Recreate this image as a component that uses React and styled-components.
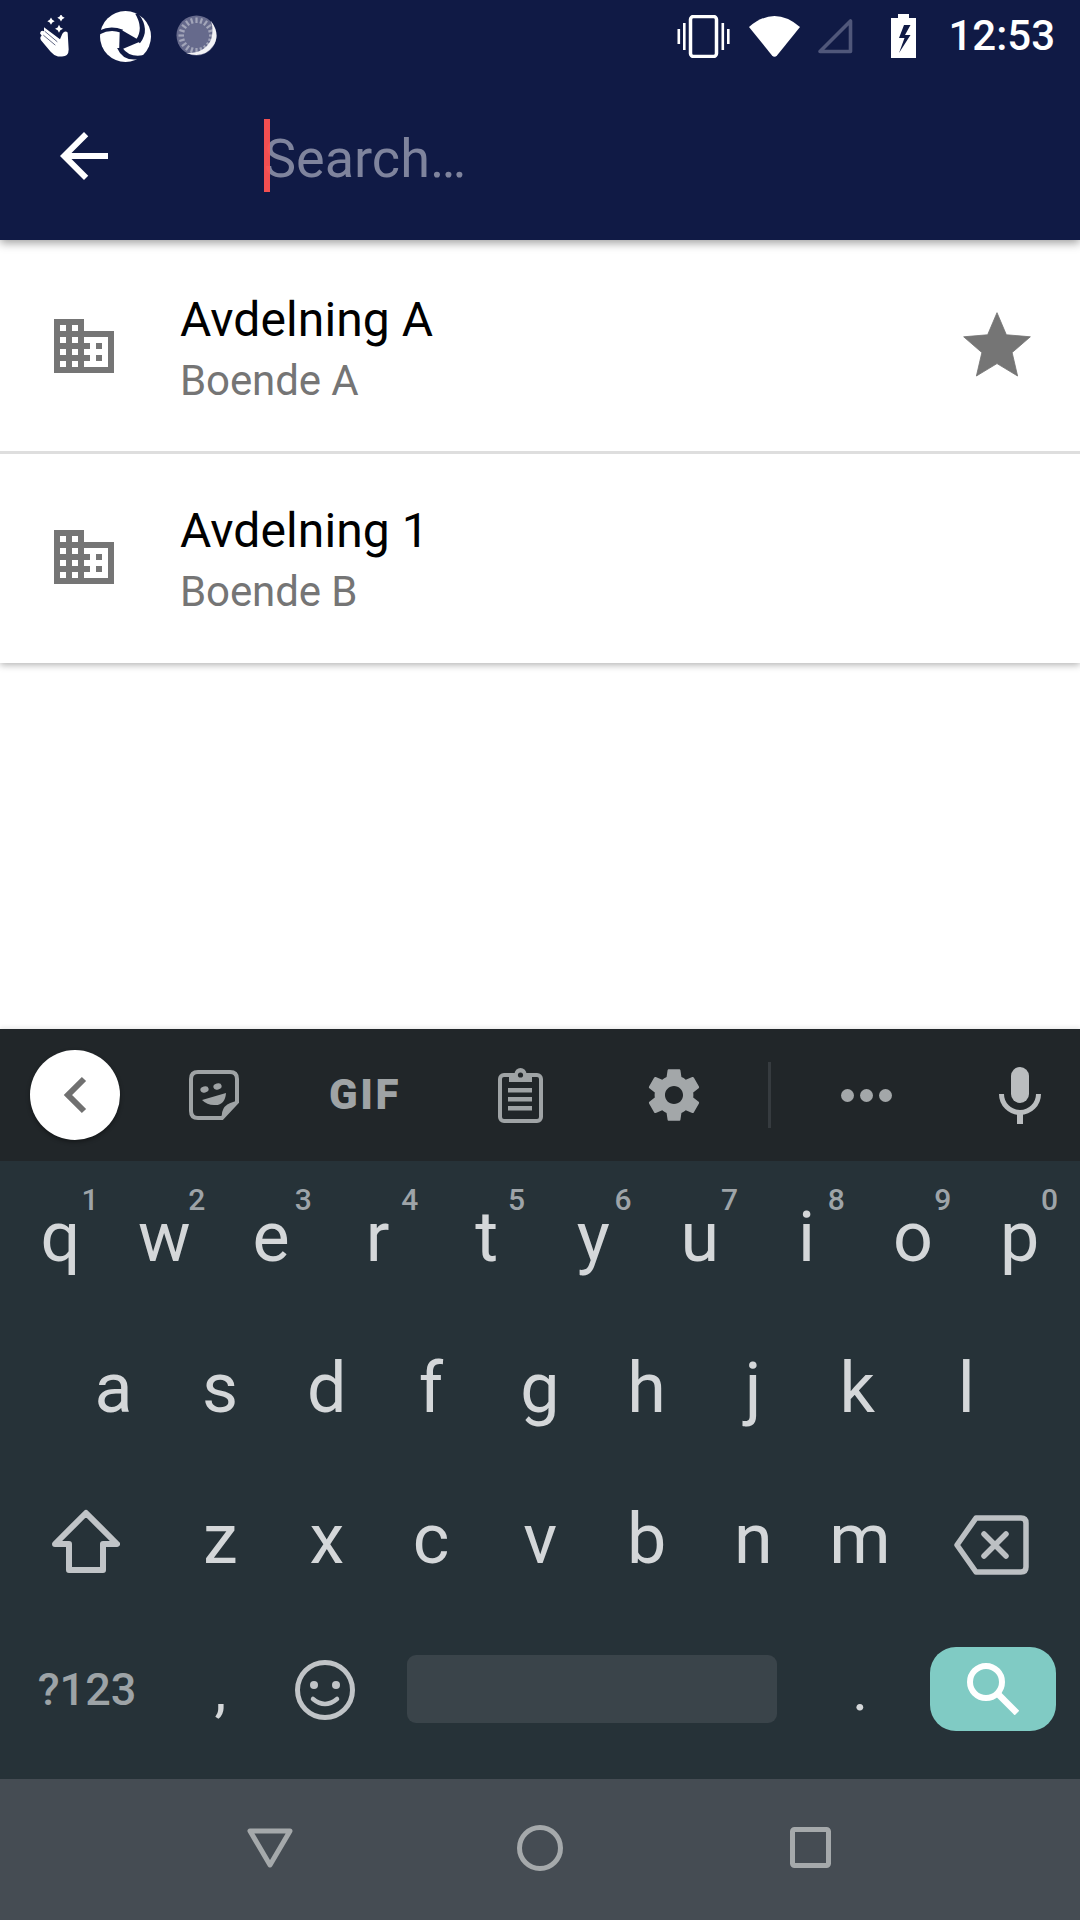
import React from "react";
import styled, { createGlobalStyle } from "styled-components";

const GlobalStyle = createGlobalStyle`
  html, body {
    margin: 0;
    padding: 0;
    background: #fff;
    font-family: Roboto, "Liberation Sans", sans-serif;
  }
`;

const Screen = styled.div`
  width: 1080px;
  height: 1920px;
  display: flex;
  flex-direction: column;
  overflow: hidden;
  background: #fff;
`;

const Header = styled.header`
  position: relative;
  z-index: 2;
  height: 240px;
  flex: none;
  background: #101a45;
  box-shadow: 0 3px 9px rgba(0, 0, 0, 0.38);
`;

const StatusBar = styled.div`
  height: 72px;
  display: flex;
  align-items: center;
  justify-content: space-between;
  padding: 0 25px 0 40px;
`;

const StatusGroup = styled.div`
  display: flex;
  align-items: center;
`;

const StatusIcon = styled.svg`
  display: block;
  flex: none;
  margin-left: ${(p) => p.$gap || 0}px;
`;

const Clock = styled.span`
  margin-left: 32px;
  font-size: 42px;
  font-weight: 500;
  line-height: 72px;
  color: #fff;
`;

const SearchBar = styled.div`
  height: 168px;
  display: flex;
  align-items: center;
  padding-left: 48px;
`;

const SearchField = styled.div`
  position: relative;
  margin-left: 144px;
  font-size: 54px;
  line-height: 72px;
  color: #7f849d;
`;

const SearchHint = styled.span`
  display: block;
  padding-top: 3px;
  height: 69px;
`;

const Caret = styled.i`
  position: absolute;
  left: 0;
  top: -1px;
  width: 6px;
  height: 73px;
  background: #ff5252;
  opacity: 0.95;
`;

const List = styled.div`
  position: relative;
  z-index: 1;
  flex: none;
  box-shadow: 0 2px 7px rgba(0, 0, 0, 0.3);
`;

const Row = styled.div`
  position: relative;
  height: ${(p) => (p.$divided ? 212 : 211)}px;
  display: flex;
  align-items: center;
  padding: 0 43px 0 48px;
  background: #fff;
  &::before {
    content: "";
    display: ${(p) => (p.$divided ? "block" : "none")};
    position: absolute;
    left: 0;
    right: 0;
    top: 0;
    height: 3px;
    background: #dedede;
  }
`;

const RowText = styled.div`
  flex: 1;
  margin: 4px 0 0 60px;
  display: flex;
  flex-direction: column;
  gap: 6px;
`;

const Title = styled.div`
  font-size: 48px;
  line-height: 60px;
  letter-spacing: 0.1px;
  color: #000;
`;

const Subtitle = styled.div`
  font-size: 42px;
  line-height: 50px;
  letter-spacing: -0.1px;
  color: #757575;
`;

const Blank = styled.div`
  flex: 1;
`;

const Keyboard = styled.div`
  flex: none;
  height: 750px;
  background: #263238;
  box-shadow: 0 -2px 4px rgba(0, 0, 0, 0.08);
`;

const Toolbar = styled.div`
  height: 132px;
  display: grid;
  grid-template-columns: 150px 128px 174px 136px 172px 8px 3px 190px 118px;
  align-items: center;
  justify-items: center;
  background: #212629;
`;

const Slot = styled.div`
  display: flex;
  align-items: center;
  justify-content: center;
`;

const BackCircle = styled.div`
  width: 90px;
  height: 90px;
  border-radius: 50%;
  display: flex;
  align-items: center;
  justify-content: center;
  background: #fff;
  box-shadow: 0 2px 4px rgba(0, 0, 0, 0.4);
`;

const GifLabel = styled.span`
  font-size: 42px;
  font-weight: 900;
  line-height: 40px;
  letter-spacing: 2.5px;
  color: #9fa3a5;
`;

const Separator = styled.div`
  width: 3px;
  height: 66px;
  background: #363b3f;
`;

const Dot = styled.i`
  width: 13px;
  height: 13px;
  border-radius: 50%;
  background: #a3a7a9;
`;

const Dots = styled.div`
  display: flex;
  gap: 6px;
`;

const Keys = styled.div`
  padding: 0 7px 14px;
`;

const KeyRow = styled.div`
  height: 151px;
  display: flex;
  padding: 0 ${(p) => p.$inset || 0}px;
`;

const Key = styled.div`
  position: relative;
  box-sizing: border-box;
  width: ${(p) => p.$w || 106.6}px;
  flex: none;
  display: flex;
  align-items: center;
  justify-content: center;
  padding: ${(p) => p.$pad || 0};
  font-size: ${(p) => p.$size || 70}px;
  line-height: 1;
  color: ${(p) => p.$color || "#d4d7d9"};
  font-weight: ${(p) => p.$weight || 400};
`;

const Hint = styled.span`
  position: absolute;
  top: 24px;
  right: 15px;
  font-size: 30px;
  font-weight: 500;
  line-height: 30px;
  color: #9ea4a8;
`;

const SpaceBar = styled.div`
  width: 370px;
  height: 68px;
  flex: none;
  margin: 41px 0 0 27px;
  border-radius: 9px;
  background: #3a444a;
`;

const SearchKey = styled.div`
  width: 126px;
  height: 84px;
  flex: none;
  margin-top: 33px;
  border-radius: 26px;
  display: flex;
  align-items: center;
  justify-content: center;
  background: #80cbc4;
`;

const NavBar = styled.nav`
  flex: none;
  height: 141px;
  display: grid;
  grid-template-columns: 270px 270px 270px;
  justify-content: center;
  align-items: center;
  justify-items: center;
  background: #454c53;
  padding-bottom: 4px;
  box-sizing: border-box;
`;

const HandIcon = () => (
  <StatusIcon width="29" height="43" viewBox="30 32 87 128" $gap={0}>
    <g fill="#fff">
      <path d="M63 39 L67 46 L74 50 L67 54 L63 61 L59 54 L52 50 L59 46Z" />
      <path d="M93 29 L97 36 L104 40 L97 44 L93 51 L89 44 L82 40 L89 36Z" />
      <path d="M87 61 L91 69 L99 73 L91 77 L87 85 L83 77 L75 73 L83 69Z" />
      <path d="M42 68 L90 104 L97 88 Q105 76 113 84 L116 135 Q116 156 96 156 L84 156 Q72 154 62 142 L33 107 Q28 98 35 94 L30 86 Q33 76 42 80Z" />
    </g>
    <g stroke="#101a45" strokeWidth="2" fill="none">
      <path d="M44 80 L82 112" />
      <path d="M40 92 L76 122" />
    </g>
  </StatusIcon>
);

const LogoIcon = () => (
  <StatusIcon width="51" height="51" viewBox="211 14 152 152" $gap={31}>
    <circle cx="287" cy="90" r="76" fill="#fff" />
    <path d="M270 68 L333 104 L268 132Z" fill="#101a45" />
    <path d="M207 74 Q240 54 280 70 L272 78 Q238 66 207 86Z" fill="#101a45" />
    <path d="M326 22 Q362 70 330 110 L318 100 Q342 66 316 22Z" fill="#101a45" />
    <path d="M262 124 Q284 176 354 150 L354 142 Q302 158 278 124Z" fill="#101a45" />
  </StatusIcon>
);

const spinnerTicks = Array.from({ length: 20 }, (_, i) => i * 18);

const SpinnerBody = styled.g`
  filter: blur(0.5px);
`;

const SpinnerIcon = () => (
  <StatusIcon width="43" height="43" viewBox="0 0 43 43" $gap={25}>
    <SpinnerBody>
      <circle cx="20.5" cy="20.5" r="20" fill="#666a8c" />
      {spinnerTicks.map((deg) => (
        <rect key={deg} x="19.4" y="2.5" width="2.2" height="5.5" fill="#a2a5b9" transform={`rotate(${deg} 20.5 20.5)`} />
      ))}
      <path d="M35 6 Q45 20 37 31 Q28 44 10 38 Q28 39 35 25 Q38 15 35 6Z" fill="#f2f2f5" />
    </SpinnerBody>
  </StatusIcon>
);

const VibrateIcon = () => (
  <StatusIcon width="53" height="43" viewBox="0 0 53 43">
    <rect x="13.5" y="1.5" width="26" height="40" rx="3" fill="none" stroke="#fff" strokeWidth="3.5" />
    <rect x="0.5" y="14" width="2.6" height="15" fill="#fff" />
    <rect x="6" y="8" width="2.6" height="27" fill="#fff" />
    <rect x="44.5" y="8" width="2.6" height="27" fill="#fff" />
    <rect x="50" y="14" width="2.6" height="15" fill="#fff" />
  </StatusIcon>
);

const WifiIcon = () => (
  <StatusIcon width="51" height="41" viewBox="0 0 51 41" $gap={19}>
    <path d="M0 11 Q25.5 -11 51 11 L28 39.5 Q25.5 42 23 39.5Z" fill="#fff" />
  </StatusIcon>
);

const SignalIcon = () => (
  <StatusIcon width="36" height="36" viewBox="0 0 36 36" $gap={17}>
    <path d="M33.5 3 V33.5 H3Z" fill="none" stroke="#50577a" strokeWidth="3.6" strokeLinejoin="round" />
  </StatusIcon>
);

const BatteryIcon = () => (
  <StatusIcon width="25" height="44" viewBox="0 0 25 44" $gap={38}>
    <path d="M7 0 H18 V4 H25 V44 H0 V4 H7Z" fill="#fff" />
    <path d="M13 11 L8 24 H13.5 L8 39 L19.5 21 H14 L19.5 11Z" fill="#101a45" />
  </StatusIcon>
);

const BackArrow = () => (
  <svg width="72" height="72" viewBox="0 0 24 24" fill="#fff">
    <path d="M20 11H7.83l5.59-5.59L12 4l-8 8 8 8 1.41-1.41L7.83 13H20v-2z" />
  </svg>
);

const BuildingIcon = () => (
  <svg width="72" height="72" viewBox="0 0 24 24" fill="#757575" style={{ flex: "none" }}>
    <path d="M12 7V3H2v18h20V7H12zM6 19H4v-2h2v2zm0-4H4v-2h2v2zm0-4H4V9h2v2zm0-4H4V5h2v2zm4 12H8v-2h2v2zm0-4H8v-2h2v2zm0-4H8V9h2v2zm0-4H8V5h2v2zm10 12h-8v-2h2v-2h-2v-2h2v-2h-2V9h8v10zm-2-8h-2v2h2v-2zm0 4h-2v2h2v-2z" />
  </svg>
);

const StarIcon = () => (
  <svg width="80" height="80" viewBox="0 0 24 24" fill="#757575" stroke="#757575" strokeWidth="0.25" strokeLinejoin="round" style={{ flex: "none" }}>
    <path d="M12 17.27L18.18 21l-1.64-7.03L22 9.24l-7.19-.61L12 2 9.19 8.63 2 9.24l5.46 4.73L5.82 21z" />
  </svg>
);

const ChevronIcon = () => (
  <svg width="24" height="38" viewBox="0 0 24 38">
    <path d="M21 3 L5 19 L21 35" fill="none" stroke="#707070" strokeWidth="6" />
  </svg>
);

const StickerIcon = () => (
  <svg width="50" height="50" viewBox="0 0 50 50">
    <path d="M9 2 H41 Q48 2 48 9 V32 L33 48 H9 Q2 48 2 41 V9 Q2 2 9 2Z" fill="none" stroke="#9fa3a5" strokeWidth="4" />
    <path d="M49 31 L33 49 Q31 33 49 31Z" fill="#9fa3a5" />
    <ellipse cx="15.5" cy="19.5" rx="4.2" ry="3" fill="#9fa3a5" transform="rotate(-15 15.5 19.5)" />
    <ellipse cx="28.5" cy="16.5" rx="4.2" ry="3" fill="#9fa3a5" transform="rotate(-15 28.5 16.5)" />
    <path d="M13 30 L37 23 Q36 36 25 35 Q18 35 13 30Z" fill="#9fa3a5" />
  </svg>
);

const ClipboardIcon = () => (
  <svg width="45" height="55" viewBox="0 0 45 55">
    <rect x="2" y="7" width="41" height="46" rx="4" fill="none" stroke="#9fa3a5" strokeWidth="4" />
    <rect x="11" y="6" width="23" height="8" fill="#9fa3a5" />
    <circle cx="22.5" cy="6" r="6" fill="#9fa3a5" />
    <circle cx="22.5" cy="7" r="2.6" fill="#212629" />
    <rect x="10" y="20" width="24" height="4.5" fill="#9fa3a5" />
    <rect x="10" y="29" width="24" height="4.5" fill="#9fa3a5" />
    <rect x="10" y="38" width="24" height="4.5" fill="#9fa3a5" />
  </svg>
);

const GearIcon = () => (
  <svg width="62" height="62" viewBox="0 0 24 24" fill="#a3a7a9">
    <path d="M19.43 12.98c.04-.32.07-.64.07-.98s-.03-.66-.07-.98l2.11-1.65c.19-.15.24-.42.12-.64l-2-3.46c-.12-.22-.39-.3-.61-.22l-2.49 1c-.52-.4-1.08-.73-1.69-.98l-.38-2.65C14.46 2.18 14.25 2 14 2h-4c-.25 0-.46.18-.49.42l-.38 2.65c-.61.25-1.17.59-1.69.98l-2.49-1c-.23-.09-.49 0-.61.22l-2 3.46c-.13.22-.07.49.12.64l2.11 1.65c-.04.32-.07.65-.07.98s.03.66.07.98l-2.11 1.65c-.19.15-.24.42-.12.64l2 3.46c.12.22.39.3.61.22l2.49-1c.52.4 1.08.73 1.69.98l.38 2.65c.03.24.24.42.49.42h4c.25 0 .46-.18.49-.42l.38-2.65c.61-.25 1.17-.59 1.69-.98l2.49 1c.23.09.49 0 .61-.22l2-3.46c.12-.22.07-.49-.12-.64l-2.11-1.65zM12 15.5c-1.93 0-3.5-1.57-3.5-3.5s1.57-3.5 3.5-3.5 3.5 1.57 3.5 3.5-1.57 3.5-3.5 3.5z" />
  </svg>
);

const MicIcon = () => (
  <svg width="42" height="57" viewBox="0 0 42 57" fill="#babdbf">
    <rect x="12" y="0" width="18" height="36" rx="9" />
    <path d="M2.5 27 A18.5 18.5 0 0 0 39.5 27" fill="none" stroke="#babdbf" strokeWidth="5" />
    <rect x="18" y="46" width="6" height="11" />
  </svg>
);

const ShiftIcon = () => (
  <svg width="68" height="64" viewBox="0 0 68 64">
    <path d="M34 4 L65 35 H51 V61 H17 V35 H3Z" fill="none" stroke="#c0c4c7" strokeWidth="6" strokeLinejoin="round" />
  </svg>
);

const BackspaceIcon = () => (
  <svg width="75" height="60" viewBox="0 0 75 60">
    <path d="M22 3 H67 Q72 3 72 8 V52 Q72 57 67 57 H22 L3 30Z" fill="none" stroke="#bcc0c3" strokeWidth="5.5" strokeLinejoin="round" />
    <path d="M30 19 L52 41 M52 19 L30 41" fill="none" stroke="#bcc0c3" strokeWidth="5.5" strokeLinecap="round" />
  </svg>
);

const EmojiIcon = () => (
  <svg width="60" height="60" viewBox="0 0 60 60">
    <circle cx="30" cy="30" r="27.5" fill="none" stroke="#c0c4c7" strokeWidth="5" />
    <circle cx="19" cy="25" r="4" fill="#c0c4c7" />
    <circle cx="41" cy="25" r="4" fill="#c0c4c7" />
    <path d="M18 39 Q30 49 42 39" fill="none" stroke="#c0c4c7" strokeWidth="4.5" strokeLinecap="round" />
  </svg>
);

const SearchIcon = () => (
  <svg width="52" height="52" viewBox="0 0 52 52">
    <circle cx="19" cy="19" r="16" fill="none" stroke="#fff" strokeWidth="6" />
    <path d="M31 31 L50 50" fill="none" stroke="#fff" strokeWidth="6.5" />
  </svg>
);

const NavTriangle = () => (
  <svg width="46" height="40" viewBox="0 0 46 40">
    <path d="M3 3 H43 L23 37Z" fill="none" stroke="#a5a9ab" strokeWidth="5" strokeLinejoin="round" />
  </svg>
);

const NavCircle = () => (
  <svg width="46" height="46" viewBox="0 0 46 46">
    <circle cx="23" cy="23" r="20.5" fill="none" stroke="#a5a9ab" strokeWidth="5" />
  </svg>
);

const NavSquare = () => (
  <svg width="41" height="41" viewBox="0 0 41 41">
    <rect x="2.5" y="2.5" width="36" height="36" rx="2" fill="none" stroke="#a5a9ab" strokeWidth="5" />
  </svg>
);

const topRow = [
  ["q", "1"],
  ["w", "2"],
  ["e", "3"],
  ["r", "4"],
  ["t", "5"],
  ["y", "6"],
  ["u", "7"],
  ["i", "8"],
  ["o", "9"],
  ["p", "0"],
];

const places = [
  { title: "Avdelning A", sub: "Boende A", starred: true },
  { title: "Avdelning 1", sub: "Boende B", starred: false },
];

// these glyphs sit a little left of their key centre on the real keyboard
const leftLeaning = "werfkc";
const letterPad = (letter) => (leftLeaning.includes(letter) ? "0 5px 0 0" : undefined);

export default function App() {
  return (
    <Screen>
      <GlobalStyle />
      <Header>
        <StatusBar>
          <StatusGroup>
            <HandIcon />
            <LogoIcon />
            <SpinnerIcon />
          </StatusGroup>
          <StatusGroup>
            <VibrateIcon />
            <WifiIcon />
            <SignalIcon />
            <BatteryIcon />
            <Clock>12:53</Clock>
          </StatusGroup>
        </StatusBar>
        <SearchBar>
          <BackArrow />
          <SearchField>
            <Caret />
            <SearchHint>Search…</SearchHint>
          </SearchField>
        </SearchBar>
      </Header>

      <List>
        {places.map((place, i) => (
          <Row key={place.title} $divided={i > 0}>
            <BuildingIcon />
            <RowText>
              <Title>{place.title}</Title>
              <Subtitle>{place.sub}</Subtitle>
            </RowText>
            {place.starred && <StarIcon />}
          </Row>
        ))}
      </List>

      <Blank />

      <Keyboard>
        <Toolbar>
          <BackCircle>
            <ChevronIcon />
          </BackCircle>
          <Slot>
            <StickerIcon />
          </Slot>
          <GifLabel>GIF</GifLabel>
          <Slot>
            <ClipboardIcon />
          </Slot>
          <Slot>
            <GearIcon />
          </Slot>
          <span />
          <Separator />
          <Dots>
            <Dot />
            <Dot />
            <Dot />
          </Dots>
          <Slot>
            <MicIcon />
          </Slot>
        </Toolbar>
        <Keys>
          <KeyRow>
            {topRow.map(([letter, digit]) => (
              <Key key={letter} $pad={letterPad(letter)}>
                {letter}
                <Hint>{digit}</Hint>
              </Key>
            ))}
          </KeyRow>
          <KeyRow $inset={53.3}>
            {"asdfghjkl".split("").map((letter) => (
              <Key key={letter} $pad={letterPad(letter)}>
                {letter}
              </Key>
            ))}
          </KeyRow>
          <KeyRow>
            <Key $w={160} $pad="5px 2px 0 0">
              <ShiftIcon />
            </Key>
            {"zxcvbnm".split("").map((letter) => (
              <Key key={letter} $pad={letterPad(letter)}>
                {letter}
              </Key>
            ))}
            <Key $w={160} $pad="12px 4px 0 0">
              <BackspaceIcon />
            </Key>
          </KeyRow>
          <KeyRow>
            <Key $w={160} $size={45} $weight={500} $color="#9da3a6">
              ?123
            </Key>
            <Key $size={60}>,</Key>
            <Key $pad="0 3px 0 0">
              <EmojiIcon />
            </Key>
            <SpaceBar />
            <Key $w={153} $size={60} $pad="0 0 0 13px">
              .
            </Key>
            <SearchKey>
              <SearchIcon />
            </SearchKey>
          </KeyRow>
        </Keys>
      </Keyboard>
      <NavBar>
        <NavTriangle />
        <NavCircle />
        <NavSquare />
      </NavBar>
    </Screen>
  );
}
